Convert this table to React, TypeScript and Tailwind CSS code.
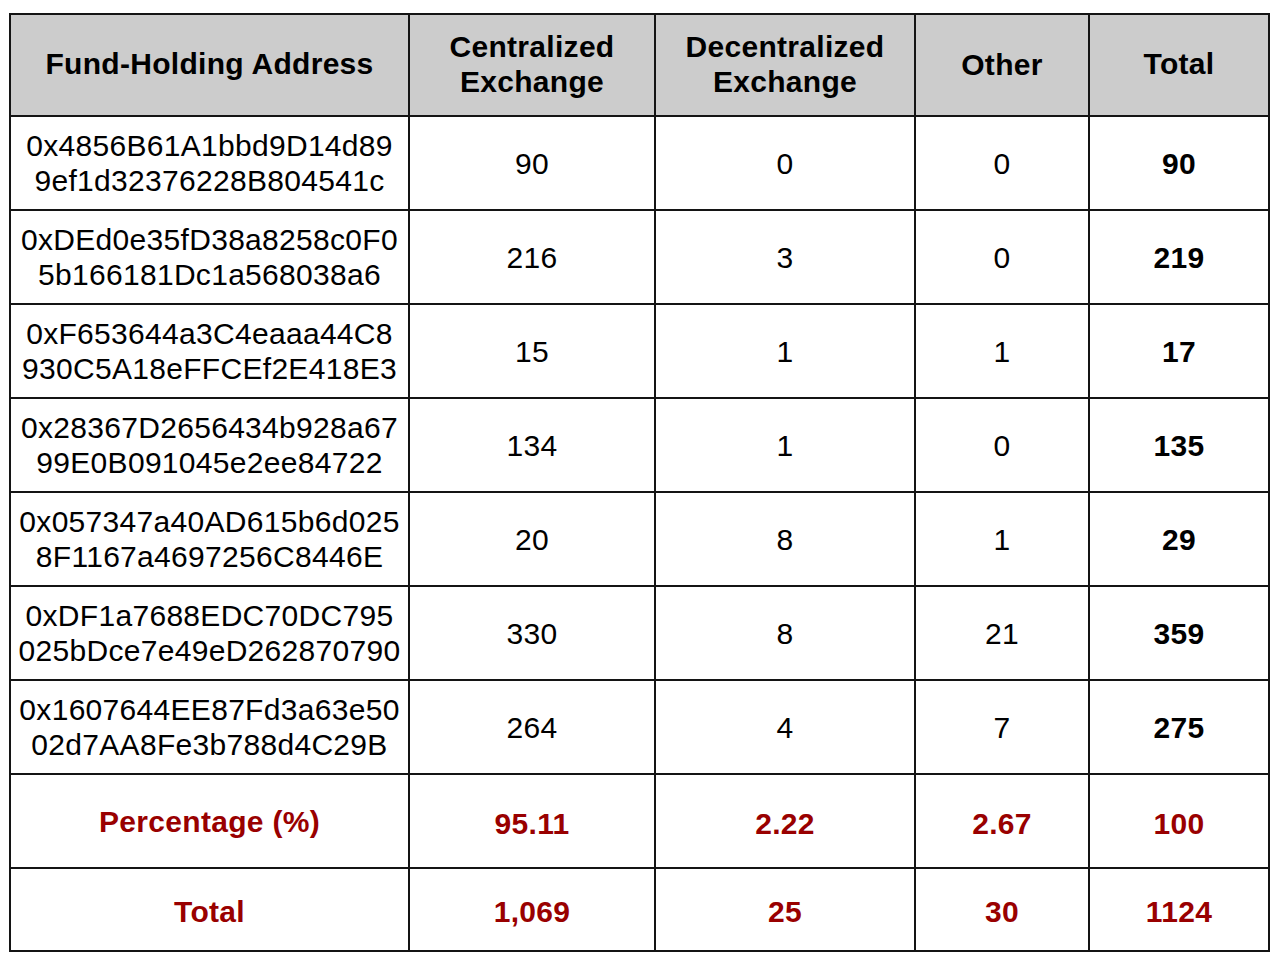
type Row = {
  address: [string, string];
  cex: string;
  dex: string;
  other: string;
  total: string;
};

const rows: Row[] = [
  { address: ["0x4856B61A1bbd9D14d89", "9ef1d32376228B804541c"], cex: "90", dex: "0", other: "0", total: "90" },
  { address: ["0xDEd0e35fD38a8258c0F0", "5b166181Dc1a568038a6"], cex: "216", dex: "3", other: "0", total: "219" },
  { address: ["0xF653644a3C4eaaa44C8", "930C5A18eFFCEf2E418E3"], cex: "15", dex: "1", other: "1", total: "17" },
  { address: ["0x28367D2656434b928a67", "99E0B091045e2ee84722"], cex: "134", dex: "1", other: "0", total: "135" },
  { address: ["0x057347a40AD615b6d025", "8F1167a4697256C8446E"], cex: "20", dex: "8", other: "1", total: "29" },
  { address: ["0xDF1a7688EDC70DC795", "025bDce7e49eD262870790"], cex: "330", dex: "8", other: "21", total: "359" },
  { address: ["0x1607644EE87Fd3a63e50", "02d7AA8Fe3b788d4C29B"], cex: "264", dex: "4", other: "7", total: "275" },
];

const cell = "border-2 border-[#141414] text-center align-middle p-0";

export default function App() {
  return (
    <div className="min-h-[960px] bg-white pl-[9px] pt-[13px] font-['Liberation_Sans',Arial,sans-serif] text-[30px] tracking-[0.3px] text-black">
      <table className="table-fixed border-collapse w-[1259px]">
        <colgroup>
          <col className="w-[399px]" />
          <col className="w-[246px]" />
          <col className="w-[260px]" />
          <col className="w-[174px]" />
          <col className="w-[180px]" />
        </colgroup>
        <thead>
          <tr className="h-[102px] bg-[#cccccc] font-bold leading-[35px]">
            <th className={`${cell} pb-[4px]`}>Fund-Holding Address</th>
            <th className={`${cell} pb-[2px]`}>
              Centralized
              <br />
              Exchange
            </th>
            <th className={`${cell} pb-[2px]`}>
              Decentralized
              <br />
              Exchange
            </th>
            <th className={`${cell} pb-[2px]`}>Other</th>
            <th className={`${cell} pb-[4px]`}>Total</th>
          </tr>
        </thead>
        <tbody>
          {rows.map((r) => (
            <tr key={r.address[0]} className="h-[94px] leading-[35px]">
              <td className={cell}>
                {r.address[0]}
                <br />
                {r.address[1]}
              </td>
              <td className={cell}>{r.cex}</td>
              <td className={cell}>{r.dex}</td>
              <td className={cell}>{r.other}</td>
              <td className={`${cell} font-bold`}>{r.total}</td>
            </tr>
          ))}
          <tr className="h-[94px] font-bold text-[#990000]">
            <td className={cell}>Percentage (%)</td>
            <td className={`${cell} pt-[4px]`}>95.11</td>
            <td className={`${cell} pt-[4px]`}>2.22</td>
            <td className={`${cell} pt-[4px]`}>2.67</td>
            <td className={`${cell} pt-[4px]`}>100</td>
          </tr>
          <tr className="h-[83px] font-bold text-[#990000]">
            <td className={`${cell} pt-[4px]`}>Total</td>
            <td className={`${cell} pt-[4px]`}>1,069</td>
            <td className={`${cell} pt-[4px]`}>25</td>
            <td className={`${cell} pt-[4px]`}>30</td>
            <td className={`${cell} pt-[4px]`}>1124</td>
          </tr>
        </tbody>
      </table>
    </div>
  );
}
